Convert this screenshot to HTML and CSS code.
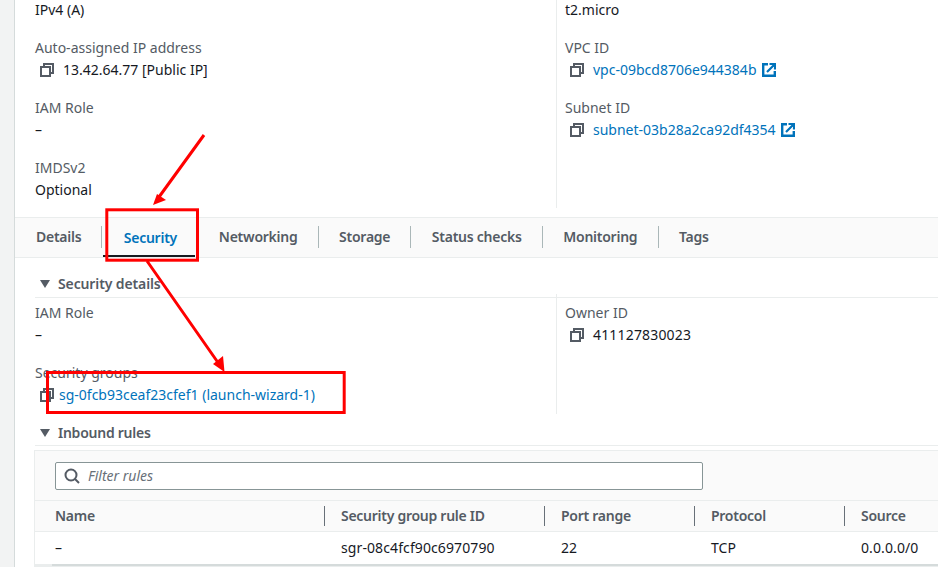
FILE: index.html
```html
<!DOCTYPE html>
<html lang="en">
<head>
<meta charset="utf-8">
<title>Instance security</title>
<link rel="stylesheet" href="styles.css">
</head>
<body>
<svg width="0" height="0" class="defs" aria-hidden="true">
  <symbol id="copy" viewBox="0 0 14 14"><path d="M4 4V1h9v9h-3" fill="none" stroke="currentColor" stroke-width="2"/><rect x="1" y="4" width="9" height="9" fill="none" stroke="currentColor" stroke-width="2"/></symbol>
  <symbol id="ext" viewBox="0 0 14 14"><path d="M6 1.200H1.200v11.600h11.600V8" fill="none" stroke="currentColor" stroke-width="2.400"/><path d="M5 9l7-7M7.500 1h5.500v5.500" fill="none" stroke="currentColor" stroke-width="2.200"/></symbol>
</svg>
<div class="shell">
  <main class="panel">
    <section class="kv top">
      <div class="col">
        <div class="first">IPv4 (A)</div>
        <div class="field"><div class="label">Auto-assigned IP address</div><div class="value"><svg class="ic"><use href="#copy"/></svg>13.42.64.77 [Public IP]</div></div>
        <div class="field"><div class="label">IAM Role</div><div class="plain">–</div></div>
        <div class="field"><div class="label">IMDSv2</div><div class="plain">Optional</div></div>
      </div>
      <div class="col">
        <div class="first">t2.micro</div>
        <div class="field"><div class="label">VPC ID</div><div class="value"><svg class="ic"><use href="#copy"/></svg><a>vpc-09bcd8706e944384b</a><svg class="ex"><use href="#ext"/></svg></div></div>
        <div class="field"><div class="label">Subnet ID</div><div class="value"><svg class="ic"><use href="#copy"/></svg><a>subnet-03b28a2ca92df4354</a><svg class="ex"><use href="#ext"/></svg></div></div>
      </div>
    </section>
    <nav class="tabs">
      <span class="tab first-tab sep">Details</span>
      <span class="tab active">Security</span>
      <span class="tab sep">Networking</span>
      <span class="tab sep">Storage</span>
      <span class="tab sep">Status checks</span>
      <span class="tab sep">Monitoring</span>
      <span class="tab">Tags</span>
    </nav>
    <h2 class="head h-sec"><i class="caret"></i>Security details</h2>
    <section class="kv sec">
      <div class="col">
        <div class="field f0"><div class="label">IAM Role</div><div class="plain">–</div></div>
        <div class="field"><div class="label">Security groups</div><div class="value sg"><svg class="ic"><use href="#copy"/></svg><a>sg-0fcb93ceaf23cfef1 (launch-wizard-1)</a></div></div>
      </div>
      <div class="col">
        <div class="field f0"><div class="label">Owner ID</div><div class="value digits"><svg class="ic"><use href="#copy"/></svg>411127830023</div></div>
      </div>
    </section>
    <h2 class="head h-in"><i class="caret"></i>Inbound rules</h2>
    <section class="tablebox">
      <div class="filter">
        <div class="input">
          <svg class="search" viewBox="0 0 16 16"><circle cx="7" cy="7" r="5.5" fill="none" stroke="currentColor" stroke-width="2"/><path d="M11 11l4 4" stroke="currentColor" stroke-width="2"/></svg>
          <span>Filter rules</span>
        </div>
      </div>
      <div class="row hdr"><div>Name</div><div>Security group rule ID</div><div>Port range</div><div>Protocol</div><div>Source</div></div>
      <div class="row body"><div>–</div><div>sgr-08c4fcf90c6970790</div><div>22</div><div>TCP</div><div>0.0.0.0/0</div></div>
      <div class="scroll"><div class="thumb"></div></div>
    </section>
  </main>
</div>
<svg class="marks" viewBox="0 0 938 567" aria-hidden="true">
  <rect x="106.800" y="209.800" width="90.700" height="50.400" />
  <rect x="47.500" y="372.500" width="296.700" height="40" />
  <path d="M204 135L159 197M147 261L219 364" />
  <polygon points="153,205 157,194 166,200" />
  <polygon points="224.500,372 213,364 223,356" />
</svg>
</body>
</html>
```
FILE: styles.css
```css
* { box-sizing: border-box; }
html, body { margin: 0; height: 567px; overflow: hidden; }
body { background: #f2f3f3; font: 14px/22px "Noto Sans", sans-serif; color: #16191f; position: relative; }
.defs { position: absolute; }
.shell { padding-left: 14px; height: 567px; }
.panel { background: #fff; border-left: 1px solid #d5dbdb; height: 567px; overflow: hidden; }
a { color: #0073bb; }
.kv { display: grid; grid-template-columns: 521px 1fr; padding-left: 20px; }
.col + .col { border-left: 1px solid #eaeded; padding-left: 8px; }
.top { height: 208px; }
.first { margin-top: -1px; }
.field { margin-top: 16px; }
.label { color: #545b64; }
.value { display: flex; align-items: center; padding-left: 5px; }
.digits { letter-spacing: 0.17px; }
.ic { width: 14px; height: 14px; color: #545b64; margin-right: 9px; flex: none; }
.ex { width: 14px; height: 14px; color: #0073bb; margin-left: 5px; flex: none; }
.tabs { margin-top: 9px; height: 41px; background: #fafafa; border-top: 1px solid #eaeded; border-bottom: 1px solid #eaeded; display: flex; font-weight: 600; letter-spacing: -0.25px; color: #545b64; padding-left: 21px; }
.tab { display: flex; align-items: center; padding: 0 20.2px 0 20.4px; margin: 8px 0 9px; }
.tab.sep { border-right: 1px solid #aab7b8; }
.tab.first-tab { padding: 0 20px 0 0; }
.tab.active { color: #0073bb; margin: 0; padding: 0; width: 96px; justify-content: center; position: relative; }
.tab.active::after { content: ""; position: absolute; left: 1px; right: 3px; bottom: 0; height: 2px; background: #16191f; }
.head { margin: 0 0 0 20px; font-size: 14px; line-height: 22px; font-weight: 600; letter-spacing: -0.12px; color: #545b64; display: flex; align-items: center; border-bottom: 1px solid #eaeded; height: 25px; padding-bottom: 2px; }
.h-sec { margin-top: 15px; }
.h-in { margin-top: 7px; padding: 1px 0; letter-spacing: -0.25px; }
.caret { width: 0; height: 0; border-left: 5px solid transparent; border-right: 5px solid transparent; border-top: 8px solid #545b64; margin: 0 8px 0 5px; }
.sec { height: 120px; margin-top: -4px; }
.f0 { margin-top: 8px; }
.sg .ic { margin-right: 5px; }
.tablebox { margin: 4px 0 0 19px; border-top: 1px solid #eaeded; border-left: 1px solid #eaeded; background: #fafafa; height: 200px; }
.filter { height: 50px; padding: 11px 0 0 20px; border-bottom: 1px solid #eaeded; }
.input { width: 648px; height: 28px; background: #fff; border: 1px solid #879596; border-radius: 2px; display: flex; align-items: center; padding-left: 8px; color: #687078; font-style: italic; }
.search { width: 16px; height: 16px; color: #545b64; margin-right: 8px; }
.row { display: grid; grid-template-columns: 289px 220px 150px 150px 1fr; }
.row > div { padding-left: 16px; }
.row > div:first-child { padding-left: 20px; }
.hdr { height: 31px; align-items: center; font-weight: 600; letter-spacing: -0.27px; color: #545b64; border-bottom: 1px solid #eaeded; }
.hdr > div + div { border-left: 1px solid #687078; height: 20px; line-height: 20px; }
.body { height: 32px; align-items: center; background: #fff; letter-spacing: 0.1px; }
.body > div + div { padding-left: 17px; }
.scroll { height: 3px; background: #eaeded; }
.thumb { height: 2px; margin-left: 17px; background: #d5dbdb; }
.marks { position: absolute; left: 0; top: 0; width: 938px; height: 567px; pointer-events: none; }
.marks rect { fill: none; stroke: #f00; stroke-width: 3; }
.marks path { fill: none; stroke: #f00; stroke-width: 3; }
.marks polygon { fill: #f00; }
```
